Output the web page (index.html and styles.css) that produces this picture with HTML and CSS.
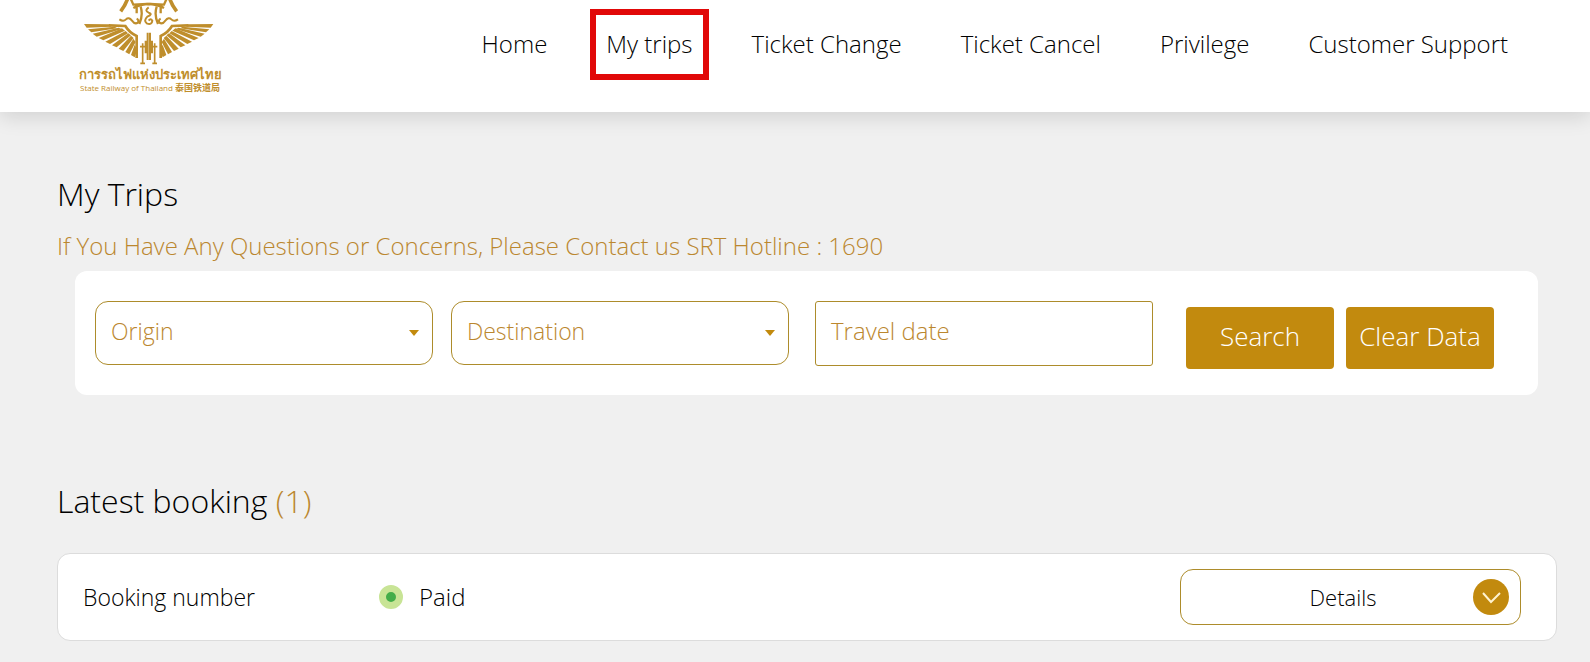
FILE: index.html
```html
<!DOCTYPE html>
<html lang="en">
<head>
<meta charset="utf-8">
<meta name="viewport" content="width=device-width, initial-scale=1">
<title>My Trips - State Railway of Thailand</title>
<link rel="stylesheet" href="styles.css">
</head>
<body>
<header class="site-header">
  <a class="brand" href="#">
    <svg class="brand-mark" viewBox="0 0 444 198" aria-hidden="true">
      <defs>
        <g id="half" fill="none" stroke="#bf8e2c">
          <path stroke-width="11" d="M156 -8 Q150 14 134 34"/>
          <path stroke-width="7" d="M164 -4 L172 14 L214 12 M172 24 Q192 12 222 12 M182 14 V40 M194 20 Q202 46 190 72"/>
          <path stroke-width="6" d="M130 58 Q142 66 150 58 T168 62 Q176 74 186 68 Q190 60 182 56"/>
          <path stroke-width="8" d="M182 174 V108 Q160 98 148 78 L98 76"/>
          <g fill="#bf8e2c" stroke="none">
            <path d="M24 72 L98 73 L106 80 L32 83Z"/>
            <path d="M36 88 L116 80 L124 85 L46 97Z"/>
            <path d="M50 101 L128 83 L137 87 L62 110Z"/>
            <path d="M68 114 L138 85 L147 92 L82 121Z"/>
            <path d="M88 125 L149 93 L156 100 L102 132Z"/>
            <path d="M108 136 L157 100 L165 106 L122 142Z"/>
            <path d="M128 146 L165 107 L173 114 L142 153Z"/>
            <path d="M148 156 L172 116 L179 126 L160 163Z"/>
            <path d="M165 165 L176 134 L184 150 L176 172Z"/>
          </g>
          <path stroke-width="5" d="M200 130 V188 M192 140 H208 M193 190 H207"/>
        </g>
      </defs>
      <use href="#half"/>
      <use href="#half" transform="translate(436 0) scale(-1 1)"/>
      <path fill="none" stroke="#bf8e2c" stroke-width="6" d="M218 22 Q204 32 218 38 Q232 42 214 50 Q202 62 212 70 Q228 76 229 62 Q224 54 218 62 M215 98 V180 M222 98 V180 M209 122 V160 M228 122 V160"/>
    </svg>
    <span class="brand-thai" lang="th">การรถไฟแห่งประเทศไทย</span>
    <span class="brand-sub">State Railway of Thailand <span class="brand-zh" lang="zh">泰国铁道局</span></span>
  </a>
  <nav class="main-nav" aria-label="Main">
    <a href="#">Home</a>
    <a class="current" href="#" aria-current="page">My trips</a>
    <a href="#">Ticket Change</a>
    <a href="#">Ticket Cancel</a>
    <a href="#">Privilege</a>
    <a href="#">Customer Support</a>
  </nav>
</header>

<main class="page">
  <h1 class="title">My Trips</h1>
  <p class="hotline">If You Have Any Questions or Concerns, Please Contact us SRT Hotline : 1690</p>

  <form class="search">
    <div class="field">
      <select id="origin" class="control"><option value=""></option></select>
      <label class="field-label" for="origin">Origin</label>
      <svg class="caret" viewBox="0 0 10 6" aria-hidden="true"><path d="M0 0H10L5 6Z"/></svg>
    </div>
    <div class="field">
      <select id="destination" class="control"><option value=""></option></select>
      <label class="field-label" for="destination">Destination</label>
      <svg class="caret" viewBox="0 0 10 6" aria-hidden="true"><path d="M0 0H10L5 6Z"/></svg>
    </div>
    <div class="field field-date">
      <input id="date" class="control control-date" type="text">
      <label class="field-label label-date" for="date">Travel date</label>
    </div>
    <div class="actions">
      <button class="btn" type="submit">Search</button>
      <button class="btn" type="reset">Clear Data</button>
    </div>
  </form>

  <h2 class="title title-latest">Latest booking <span class="count">(1)</span></h2>

  <article class="booking">
    <span class="booking-number">Booking number</span>
    <span class="status"><span class="dot"></span>Paid</span>
    <button class="details" type="button" aria-expanded="false">
      <span class="details-label">Details</span>
      <svg class="details-icon" viewBox="0 0 36 36" aria-hidden="true"><circle cx="18" cy="18" r="18"/><path d="M10 14L18 23L27 14"/></svg>
    </button>
  </article>
</main>
</body>
</html>
```
FILE: styles.css
```css
:root {
  --gold: #c28a0e;
  --gold-text: #bb872f;
  --gold-line: #ad8c2b;
}

* { box-sizing: border-box; }

body {
  margin: 0;
  min-height: 100vh;
  background: #f0f0f0;
  color: #000;
  font-family: "Open Sans", "Noto Sans", "Noto Sans CJK SC", sans-serif;
  font-size: 24px;
  font-weight: 300;
  line-height: 32px;
}

button, input, select { font: inherit; }

.site-header {
  display: flex;
  justify-content: space-between;
  align-items: flex-start;
  height: 112px;
  padding: 0 82px 0 76px;
  background: #fff;
  box-shadow: 0 4px 20px rgba(0, 0, 0, 0.14);
}

.brand {
  display: flex;
  flex-direction: column;
  align-items: center;
  width: 148px;
  color: #bf8e2c;
  text-decoration: none;
  white-space: nowrap;
}

.brand-mark { width: 148px; height: 66px; }

.brand-thai {
  font-size: 13px;
  font-weight: 600;
  line-height: 16px;
}

.brand-sub {
  font-size: 8px;
  font-weight: 500;
  line-height: 12px;
}

.brand-zh {
  font-family: "Noto Sans CJK SC", sans-serif;
  font-size: 9px;
  font-weight: 700;
}

.main-nav {
  display: flex;
  gap: 59px;
  padding-top: 9px;
}

.main-nav a {
  padding: 19px 0;
  color: inherit;
  text-decoration: none;
  white-space: nowrap;
}

.main-nav .current {
  margin: 0 -16px;
  padding: 13px 10px 14px;
  border: 6px solid #e10808;
}

.page { padding: 60px 33px 20px 57px; }

.title {
  margin: 0;
  font-size: 32px;
  font-weight: 300;
  line-height: 44px;
}

.hotline {
  margin: 14px 0 9px;
  color: var(--gold-text);
}

.search {
  display: flex;
  gap: 18px;
  margin: 0 19px 0 18px;
  padding: 30px 44px 26px 20px;
  border-radius: 12px;
  background: #fff;
}

.field {
  position: relative;
  flex: 1;
}

.field-date { margin-left: 8px; }

.control {
  appearance: none;
  width: 100%;
  height: 64px;
  padding: 0 15px;
  border: 1px solid var(--gold-line);
  border-radius: 13px;
  background: #fff;
  color: var(--gold-text);
}

.control-date {
  height: 65px;
  border-radius: 3px;
}

.field-label {
  position: absolute;
  top: 14px;
  left: 16px;
  color: var(--gold-text);
  font-size: 23px;
  pointer-events: none;
}

.label-date { font-size: 24px; }

.caret {
  position: absolute;
  top: 29px;
  right: 14px;
  width: 10px;
  fill: var(--gold);
  pointer-events: none;
}

.actions {
  display: flex;
  gap: 12px;
  padding: 6px 0 0 15px;
}

.btn {
  width: 148px;
  height: 62px;
  padding: 0 0 4px;
  border: 0;
  border-radius: 4px;
  background: var(--gold);
  color: #fff;
  font-size: 26px;
  white-space: nowrap;
}

.title-latest { margin-top: 84px; }

.count { color: var(--gold-text); }

.booking {
  display: flex;
  align-items: center;
  margin-top: 30px;
  padding: 15px 35px 15px 25px;
  border: 1px solid #dcdcdc;
  border-radius: 13px;
  background: #fff;
}

.booking-number {
  width: 296px;
  font-size: 23px;
}

.status {
  display: flex;
  align-items: center;
  gap: 16px;
}

.dot {
  width: 24px;
  height: 24px;
  border: 7px solid #c8e496;
  border-radius: 50%;
  background: #43ad49;
}

.details {
  display: grid;
  grid-template-columns: 1fr 36px;
  align-items: center;
  width: 341px;
  height: 56px;
  margin-left: auto;
  padding: 0 11px 0 32px;
  border: 1px solid var(--gold-line);
  border-radius: 13px;
  background: #fff;
  color: inherit;
  font-size: 22px;
}

.details-icon { width: 36px; height: 36px; }
.details-icon circle { fill: var(--gold); }
.details-icon path {
  fill: none;
  stroke: #fff3cf;
  stroke-width: 2;
}
```
